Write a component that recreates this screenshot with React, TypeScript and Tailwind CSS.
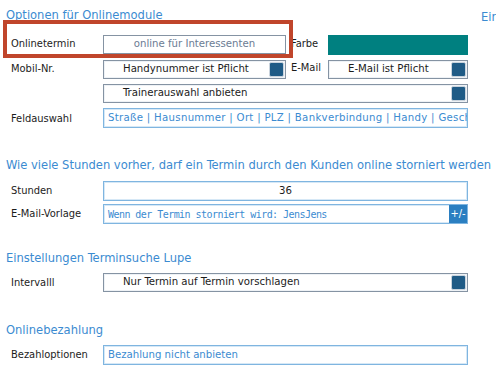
import React from 'react';

const font = { fontFamily: '"DejaVu Sans Condensed", "DejaVu Sans", Verdana, sans-serif' };
const mono = { fontFamily: '"DejaVu Sans Mono", "Liberation Mono", monospace' };

function Heading({ children, className = '' }: { children: React.ReactNode; className?: string }) {
  return <div className={`pl-[6px] text-[12.8px] leading-[16px] text-[#3b8bd1] ${className}`}>{children}</div>;
}

function Label({ children, className = '' }: { children?: React.ReactNode; className?: string }) {
  return <div className={`w-[103px] shrink-0 pl-[11px] pt-[2px] text-[11px] leading-[14px] text-[#1c1c1c] ${className}`}>{children}</div>;
}

// dropdown-like field with the dark square on the right
function Select({ text, className = '' }: { text: string; className?: string }) {
  return (
    <div className={`flex h-[19px] items-center border border-[#8593a3] bg-white shadow-[inset_0_0_0_1px_#eef2f6] ${className}`}>
      <span className="flex-1 truncate pl-[19px] text-[11.3px] text-[#1c1c1c]">{text}</span>
      <span className="mr-[1px] h-[15px] w-[15px] rounded-[2px] border border-[#c9d3dd] bg-[#1f5b86]" />
    </div>
  );
}

function Input({ children, className = '' }: { children: React.ReactNode; className?: string }) {
  return (
    <div className={`flex h-[20px] items-center overflow-hidden border border-[#7fb5e0] bg-white shadow-[inset_0_0_0_1px_#d6e8f6] ${className}`}>
      {children}
    </div>
  );
}

export default function App() {
  return (
    <div style={font} className="relative h-[388px] w-[496px] overflow-hidden bg-white">
      <div className="flex items-start pt-[7px]">
        <Heading className="flex-1">Optionen für Onlinemodule</Heading>
        <div className="w-[15px] pt-[2px] text-[12.8px] leading-[16px] text-[#3b8bd1]">Ein</div>
      </div>

      <div className="mt-[10px] flex flex-col gap-[5px]">
        <div className="flex items-start">
          <Label>Onlinetermin</Label>
          <div className="flex h-[19px] w-[183px] items-center justify-center border border-[#8593a3] bg-white text-[11.3px] text-[#6b7c93]">
            online für Interessenten
          </div>
          <div className="w-[42px] pl-[5px] pt-[2px] text-[11px] leading-[14px] text-[#1c1c1c]">Farbe</div>
          <div className="h-[20px] w-[140px] bg-[#008080]" />
        </div>
        <div className="flex items-start">
          <Label>Mobil-Nr.</Label>
          <Select text="Handynummer ist Pflicht" className="w-[183px]" />
          <div className="w-[42px] pl-[5px] pt-[1px] text-[11px] leading-[14px] text-[#1c1c1c]">E-Mail</div>
          <Select text="E-Mail ist Pflicht" className="w-[140px]" />
        </div>
        <div className="flex items-start">
          <Label />
          <Select text="Trainerauswahl anbieten" className="w-[365px]" />
        </div>
        <div className="flex items-start">
          <Label className="pt-[4px]">Feldauswahl</Label>
          <Input className="w-[365px]">
            <span className="whitespace-nowrap pl-[4px] text-[11.3px] tracking-[0.3px] text-[#3b8bd1]">
              Straße | Hausnummer | Ort | PLZ | Bankverbindung | Handy | Geschlecht | Geburtsdatum
            </span>
          </Input>
        </div>
      </div>

      <Heading className="mt-[29px]">Wie viele Stunden vorher, darf ein Termin durch den Kunden online storniert werden</Heading>
      <div className="mt-[8px] flex flex-col gap-[3px]">
        <div className="flex items-start">
          <Label className="pt-[3px]">Stunden</Label>
          <Input className="w-[365px] justify-center">
            <span className="text-[11.3px] text-[#1c1c1c]">36</span>
          </Input>
        </div>
        <div className="flex items-start">
          <Label className="pt-[3px]">E-Mail-Vorlage</Label>
          <Input className="w-[365px]">
            <span style={mono} className="flex-1 truncate pl-[4px] text-[10px] tracking-[-0.55px] text-[#3b8bd1]">
              Wenn der Termin storniert wird: JensJens
            </span>
            <span className="flex h-full w-[18px] items-center justify-center bg-[#2b7fc1] text-[11px] text-white">+/-</span>
          </Input>
        </div>
      </div>

      <Heading className="mt-[26px]">Einstellungen Terminsuche Lupe</Heading>
      <div className="mt-[7px] flex items-start">
        <Label className="pt-[3px]">Intervalll</Label>
        <Select text="Nur Termin auf Termin vorschlagen" className="w-[365px]" />
      </div>

      <Heading className="mt-[30px]">Onlinebezahlung</Heading>
      <div className="mt-[7px] flex items-start">
        <Label className="pt-[3px]">Bezahloptionen</Label>
        <Input className="w-[365px]">
          <span className="pl-[4px] text-[11.3px] text-[#3b8bd1]">Bezahlung nicht anbieten</span>
        </Input>
      </div>

      {/* red highlight frame around the Onlinetermin row */}
      <div className="absolute left-[3px] top-[20px] h-[38px] w-[290px] border-[4px] border-[#c0452b]" />
    </div>
  );
}
